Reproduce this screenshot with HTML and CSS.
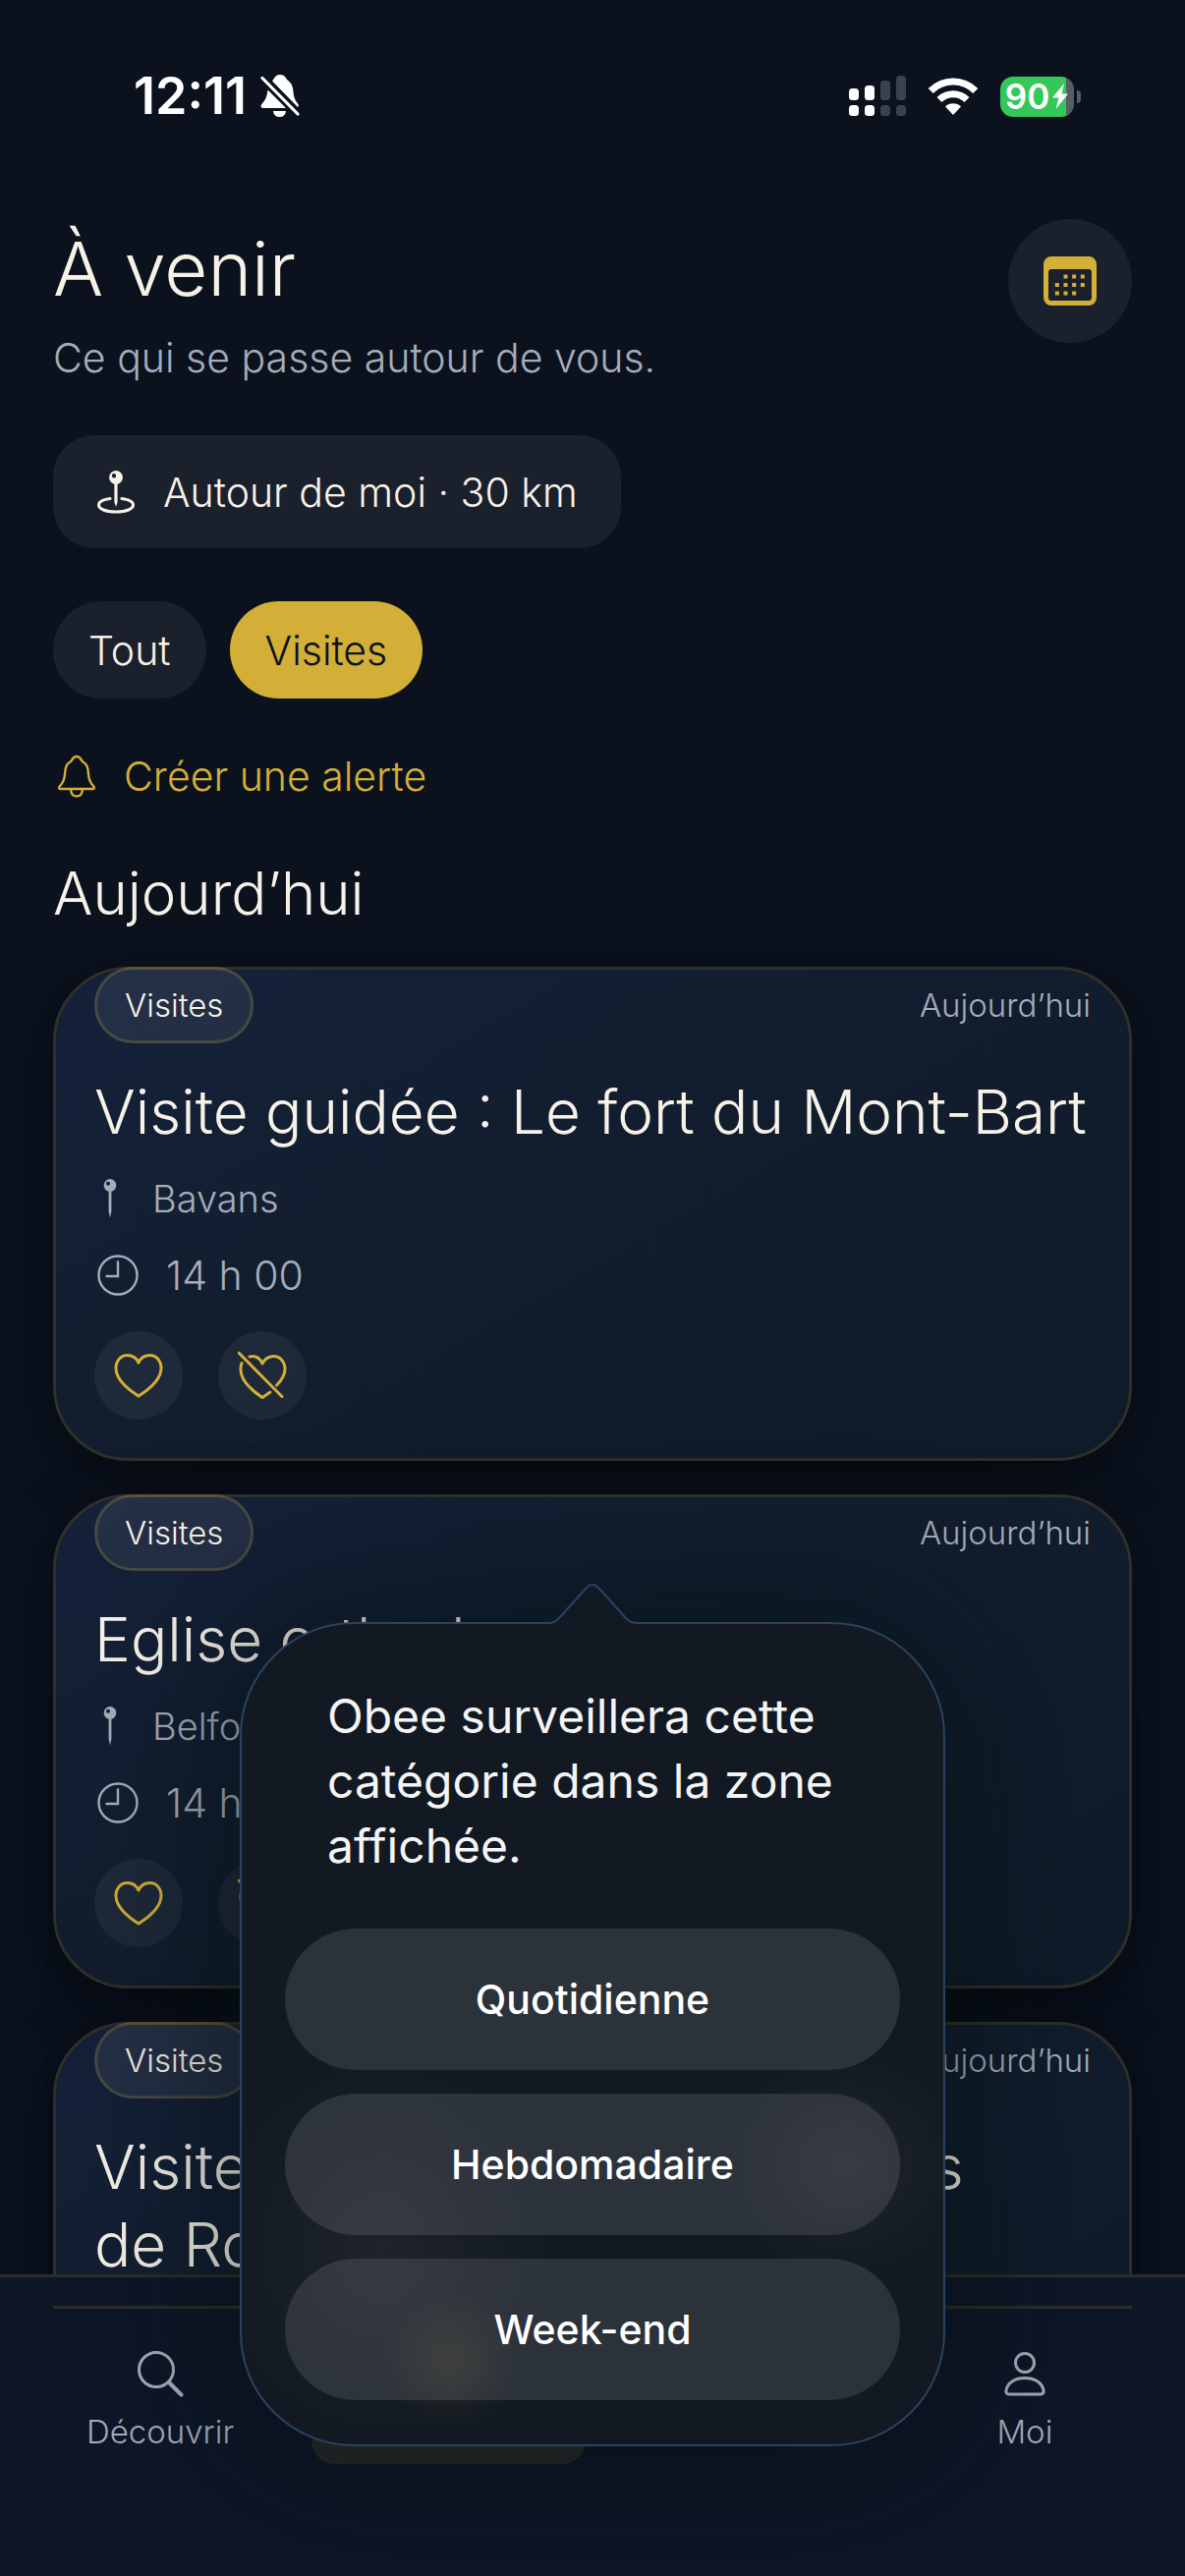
FILE: index.html
```html
<!DOCTYPE html>
<html lang="fr">

<head>
    <meta charset="UTF-8">
    <meta name="viewport" content="width=device-width, initial-scale=1.0">
    <title>À venir</title>
    <link rel="stylesheet" href="styles.css">
</head>

<body>
    <!-- Icônes partagées -->
    <svg class="sprite" aria-hidden="true">
        <symbol id="pin" viewBox="0 0 14 40">
            <path fill="currentColor" fill-rule="evenodd" d="M7 0a6.5 6.5 0 0 1 1.4 12.8V33L7 39.5 5.600 33V12.800A6.500 6.500 0 0 1 7 0zM5 2.800a2 2 0 1 0 0 4 2 2 0 0 0 0-4z" />
        </symbol>
        <symbol id="clock" viewBox="0 0 42 42">
            <g fill="none" stroke="currentColor" stroke-width="2.400" stroke-linecap="round">
                <circle cx="21" cy="21" r="19.500" />
                <path d="M21 7.500V22H9.500" />
            </g>
        </symbol>
        <symbol id="heart" viewBox="0 0 50 46">
            <path fill="none" stroke="currentColor" stroke-width="3" stroke-linejoin="round" d="M25 44C14 37 2 27 2 15.500 2 8 7 2.500 13.500 2.500c5 0 9.200 2.500 11.500 7.500 2.300-5 6.500-7.500 11.500-7.500C43 2.500 48 8 48 15.500 48 27 36 37 25 44z" />
        </symbol>
        <symbol id="heart-off" viewBox="0 0 50 50">
            <g fill="none" stroke="currentColor" stroke-width="3" stroke-linecap="round" stroke-linejoin="round">
                <path d="M12 6c6-1.500 10.500 1.500 13 7 2.500-5 6.500-7.500 11.500-7.500C43 5.500 48 11 48 18.500c0 6-3.500 11.500-8.500 16.500" />
                <path d="M4 12.500C-.5 25 10 37.500 25 47.500l8-5.500" />
                <path d="M1 2l44 44.500" />
            </g>
        </symbol>
    </svg>

    <div class="status-bar">
        <div class="status-time">
            <span>12:11</span>
            <svg width="40" height="44" viewBox="0 0 40 44" aria-hidden="true">
                <g fill="#fff">
                    <path d="M7.500 15.500L26 34H2.500C.5 34 0 32 1 30.500c4-5 5.500-7 6.500-15z" />
                    <path d="M12 6.500C14 5 14.500 0 20 0s6 4.500 8.500 6.200C32 9 33 12 33.500 17c.5 6 1.500 8.500 4.500 12.500 1 1.400 1.200 2.500 0 3.500z" />
                    <path d="M13 37h13c-.5 4-3 6-6.500 6S13.500 41 13 37z" />
                </g>
                <path d="M2 3.500l36 36.500" stroke="#fff" stroke-width="3.200" stroke-linecap="round" />
            </svg>
        </div>
        <div class="status-icons">
            <svg width="58" height="42" viewBox="0 0 58 42" aria-hidden="true">
                <g fill="#fff">
                    <rect y="13" width="10" height="12" rx="3.500" />
                    <rect x="16" y="10" width="10" height="15" rx="3.500" />
                    <rect y="30" width="10" height="11" rx="3.500" />
                    <rect x="16" y="30" width="10" height="11" rx="3.500" />
                </g>
                <g fill="#3c424c">
                    <rect x="32" y="5" width="10" height="20" rx="3.500" />
                    <rect x="48" width="10" height="25" rx="3.500" />
                    <rect x="32" y="30" width="10" height="11" rx="3.500" />
                    <rect x="48" y="30" width="10" height="11" rx="3.500" />
                </g>
            </svg>
            <svg width="52" height="38" viewBox="0 0 52 38" aria-hidden="true">
                <g fill="none" stroke="#fff" stroke-width="7">
                    <path d="M3.200 13.500a32 32 0 0 1 45.600 0" />
                    <path d="M12 22.500a20 20 0 0 1 28 0" />
                </g>
                <path d="M26 38l-8-8.500a11.500 11.500 0 0 1 16 0z" fill="#fff" />
            </svg>
            <div class="battery">
                <span class="battery-level">90<svg width="18" height="26" viewBox="0 0 18 26" aria-hidden="true">
                        <path d="M13 0L1 14.500h6.500L4.500 26 17 10.500h-6.500z" fill="#fff" />
                    </svg></span>
            </div>
        </div>
    </div>

    <main class="content">
        <header class="header">
            <div>
                <h1>À venir</h1>
                <p class="subtitle">Ce qui se passe autour de vous.</p>
            </div>
            <button type="button" class="calendar" aria-label="Calendrier">
                <svg width="54" height="50" viewBox="0 0 54 50">
                    <path fill="currentColor" fill-rule="evenodd" d="M8 0h38a8 8 0 0 1 8 8v34a8 8 0 0 1-8 8H8a8 8 0 0 1-8-8V8a8 8 0 0 1 8-8zM8 13a3 3 0 0 0-3 3v26a3 3 0 0 0 3 3h38a3 3 0 0 0 3-3V16a3 3 0 0 0-3-3z" />
                    <g fill="none" stroke="currentColor" stroke-width="4" stroke-dasharray="4 4.650">
                        <path d="M20.500 20.500h22" />
                        <path d="M11.850 29h31" />
                        <path d="M11.850 37.500h22" />
                    </g>
                </svg>
            </button>
        </header>

        <button type="button" class="zone">
            <svg width="40" height="44" viewBox="0 0 40 44" aria-hidden="true">
                <path fill="currentColor" fill-rule="evenodd" d="M20 0a7 7 0 0 1 1.600 13.800V32L20 37l-1.600-5V13.800A7 7 0 0 1 20 0zM18 3a2.200 2.200 0 1 0 0 4.400A2.200 2.200 0 0 0 18 3z" />
                <path fill="none" stroke="currentColor" stroke-width="3" stroke-linecap="round" d="M14 28.500C7 29.500 2.500 31.500 2.500 35c0 4 7 7 17.500 7s17.500-3 17.500-7c0-3.500-4.500-5.500-11.500-6.500" />
            </svg>
            Autour de moi · 30 km
        </button>

        <div class="filters">
            <button type="button" class="filter">Tout</button>
            <button type="button" class="filter active">Visites</button>
        </div>

        <button type="button" class="alert">
            <svg width="40" height="44" viewBox="0 0 40 44" aria-hidden="true">
                <g fill="none" stroke="currentColor" stroke-width="2.400" stroke-linejoin="round">
                    <path d="M20 2c-4.500 0-4 4-6.500 5.500C9 10 8.500 14 8 20c-.4 6-1.500 8.500-5 12-1.500 1.600-1.200 3 .5 3h33c1.700 0 2-1.400.5-3-3.500-3.500-4.600-6-5-12-.5-6-1-10-5.500-12.500C24 6 24.500 2 20 2z" />
                    <path d="M14 35.500c.3 4.500 2.500 7 6 7s5.700-2.500 6-7" />
                </g>
            </svg>
            Créer une alerte
        </button>

        <h2>Aujourd’hui</h2>

        <div class="events">
            <article class="card">
                <div class="card-top">
                    <span class="tag">Visites</span>
                    <span class="date">Aujourd’hui</span>
                </div>
                <h3>Visite guidée : Le fort du Mont-Bart</h3>
                <p class="place"><svg width="14" height="40" aria-hidden="true"><use href="#pin" /></svg>Bavans</p>
                <p class="time"><svg width="42" height="42" aria-hidden="true"><use href="#clock" /></svg>14 h 00</p>
                <div class="actions">
                    <button type="button" aria-label="Ajouter aux favoris"><svg width="50" height="46"><use href="#heart" /></svg></button>
                    <button type="button" aria-label="Masquer"><svg width="50" height="50"><use href="#heart-off" /></svg></button>
                </div>
            </article>

            <article class="card">
                <div class="card-top">
                    <span class="tag">Visites</span>
                    <span class="date">Aujourd’hui</span>
                </div>
                <h3>Eglise orthodoxe</h3>
                <p class="place"><svg width="14" height="40" aria-hidden="true"><use href="#pin" /></svg>Belfort</p>
                <p class="time"><svg width="42" height="42" aria-hidden="true"><use href="#clock" /></svg>14 h 00</p>
                <div class="actions">
                    <button type="button" aria-label="Ajouter aux favoris"><svg width="50" height="46"><use href="#heart" /></svg></button>
                    <button type="button" aria-label="Masquer"><svg width="50" height="50"><use href="#heart-off" /></svg></button>
                </div>
            </article>

            <article class="card">
                <div class="card-top">
                    <span class="tag">Visites</span>
                    <span class="date">Aujourd’hui</span>
                </div>
                <h3>Visite guidée des campements<br>de Ronchamp</h3>
                <p class="place"><svg width="14" height="40" aria-hidden="true"><use href="#pin" /></svg>Ronchamp</p>
            </article>
        </div>
    </main>

    <nav class="tab-bar">
        <div class="tabs">
            <a href="#decouvrir" class="tab">
                <svg width="48" height="48" viewBox="0 0 48 48" aria-hidden="true">
                    <g fill="none" stroke="currentColor" stroke-width="3" stroke-linecap="round">
                        <circle cx="20" cy="20" r="17.500" />
                        <path d="M33 33l12.500 12.500" stroke-width="4" />
                    </g>
                </svg>
                Découvrir
            </a>
            <a href="#a-venir" class="tab active" aria-current="page">
                <svg width="48" height="48" viewBox="0 0 48 48" aria-hidden="true">
                    <rect x="3" y="5" width="42" height="38" rx="7" fill="none" stroke="currentColor" stroke-width="4" />
                    <path d="M4 8h40v9H4z" fill="currentColor" />
                </svg>
                À venir
            </a>
            <a href="#favoris" class="tab">
                <svg width="48" height="48" aria-hidden="true"><use href="#heart" /></svg>
                Favoris
            </a>
            <a href="#moi" class="tab">
                <svg width="48" height="48" viewBox="0 0 48 48" aria-hidden="true">
                    <g fill="none" stroke="currentColor" stroke-width="3" stroke-linejoin="round">
                        <circle cx="24" cy="13" r="9.500" />
                        <path d="M8 45c-2.500 0-3.500-1.500-3-4C6.500 33 14 28.500 24 28.500S41.500 33 43 41c.5 2.500-.5 4-3 4z" />
                    </g>
                </svg>
                Moi
            </a>
        </div>
    </nav>

    <div class="popover" role="dialog" aria-labelledby="popover-text">
        <svg class="popover-arrow" width="92" height="44" viewBox="0 0 92 44" aria-hidden="true">
            <path d="M0 41.500c6 0 8-1 12-5L39 6c5-5.500 9-5.500 14 0l27 30.500c4 4 6 5 12 5V44H0z" fill="#121922" />
            <path d="M0 41c6 0 8-1 12-5L39 6c5-5.500 9-5.500 14 0l27 30c4 4 6 5 12 5" fill="none" stroke="#2b425f" stroke-width="2" />
        </svg>
        <p id="popover-text">Obee surveillera cette catégorie dans la zone affichée.</p>
        <button type="button">Quotidienne</button>
        <button type="button">Hebdomadaire</button>
        <button type="button">Week-end</button>
    </div>
</body>

</html>
```
FILE: styles.css
```css
* {
    box-sizing: border-box;
}

body {
    position: relative;
    display: flex;
    flex-direction: column;
    height: 100vh;
    margin: 0;
    overflow: hidden;
    background-color: #0b121e;
    color: #f7f1e8;
    font-family: Inter, "Liberation Sans", sans-serif;
    font-size: 41px;
    font-weight: 300;
    line-height: 50px;
}

h1,
h2,
h3,
p {
    margin: 0;
    font-weight: 300;
}

button {
    padding: 0;
    border: none;
    background: none;
    color: inherit;
    font: inherit;
    cursor: pointer;
}

svg {
    display: block;
    flex-shrink: 0;
}

.sprite {
    position: absolute;
    width: 0;
    height: 0;
}

/* Barre d'état */
.status-bar {
    display: flex;
    flex-shrink: 0;
    justify-content: space-between;
    align-items: center;
    height: 196px;
    padding: 0 113px 0 136px;
    color: #fff;
}

.status-time {
    display: flex;
    align-items: center;
    gap: 14px;
    font-size: 52px;
    font-weight: 600;
}

.status-icons {
    display: flex;
    align-items: center;
    gap: 22px;
}

.battery {
    position: relative;
    width: 75px;
    height: 41px;
    border-radius: 13px;
    background: linear-gradient(to right, #34c759 90%, #565b64 90%);
}

.battery::after {
    content: "";
    position: absolute;
    top: 14px;
    right: -7px;
    width: 4px;
    height: 13px;
    border-radius: 0 6px 6px 0;
    background-color: #565b64;
}

.battery-level {
    display: flex;
    align-items: center;
    justify-content: center;
    gap: 2px;
    font-size: 35px;
    font-weight: 600;
    line-height: 41px;
}

/* Contenu */
.content {
    display: flex;
    flex: 1;
    flex-direction: column;
    align-items: flex-start;
    gap: 54px;
    min-height: 0;
    padding: 27px 54px 0;
    overflow: hidden;
}

.header {
    display: flex;
    justify-content: space-between;
    align-items: flex-start;
    width: 100%;
}

h1 {
    font-size: 76px;
    line-height: 100px;
}

.subtitle {
    margin-top: 16px;
    color: #a5adbb;
}

.calendar {
    display: flex;
    justify-content: center;
    align-items: center;
    width: 126px;
    height: 126px;
    border-radius: 50%;
    background-color: #1b212c;
    color: #d3af37;
}

.zone {
    display: flex;
    flex-shrink: 0;
    align-items: center;
    gap: 28px;
    height: 115px;
    padding: 0 44px;
    border-radius: 42px;
    background-color: #1b212c;
}

.filters {
    display: flex;
    gap: 24px;
}

.filter {
    height: 99px;
    padding: 0 36px;
    border-radius: 50px;
    background-color: #1b212c;
}

.filter.active {
    background-color: #d3af37;
    color: #0b121e;
}

.alert {
    display: flex;
    align-items: center;
    gap: 28px;
    padding-left: 4px;
    color: #d3af37;
}

h2 {
    font-size: 60px;
    line-height: 80px;
}

.events {
    display: flex;
    flex-direction: column;
    gap: 34px;
    width: 100%;
    margin-top: -19px;
}

.card {
    padding: 0 39px 39px;
    border: 3px solid #2f3029;
    border-radius: 76px;
    background: linear-gradient(150deg, #14213a, #121e2f 40%, #0f1b29);
    background-clip: padding-box;
    box-shadow: 0 16px 60px rgba(0, 0, 0, 0.45);
}

.card-top {
    display: flex;
    justify-content: space-between;
    align-items: center;
    margin-top: -3px;
    font-size: 33px;
}

.tag {
    padding: 11px 28px;
    border: 3px solid rgba(211, 175, 55, 0.2);
    border-radius: 39px;
    background-color: rgba(255, 255, 255, 0.07);
}

.date {
    color: #a5adbb;
}

h3 {
    margin-top: 30px;
    font-size: 62px;
    line-height: 79px;
}

.place,
.time {
    display: flex;
    align-items: center;
    margin-top: 24px;
    color: #a5adbb;
}

.place {
    gap: 36px;
    padding-left: 9px;
    font-size: 38px;
}

.time {
    gap: 28px;
    padding-left: 3px;
    line-height: 58px;
}

.actions {
    display: flex;
    gap: 36px;
    margin-top: 28px;
}

.actions button {
    display: flex;
    justify-content: center;
    align-items: center;
    width: 90px;
    height: 90px;
    border-radius: 50%;
    background-color: rgba(255, 255, 255, 0.05);
    color: #d3af37;
}

/* Onglets */
.tab-bar {
    flex-shrink: 0;
    height: 307px;
    padding: 29px 24px 0;
    border-top: 3px solid #2d2d29;
    background-color: #0e1727;
}

.tab-bar::before {
    content: "";
    display: block;
    height: 3px;
    margin: 0 30px 24px;
    background-color: #2d2d29;
}

.tabs {
    display: flex;
    gap: 15px;
}

.tab {
    display: flex;
    flex: 1;
    flex-direction: column;
    align-items: center;
    gap: 10px;
    padding: 18px 0 8px;
    border-radius: 24px;
    color: #a5adbb;
    font-size: 33px;
    text-decoration: none;
}

.tab.active {
    background-color: rgba(211, 175, 55, 0.12);
    color: #d3af37;
}

/* Choix de la fréquence */
.popover {
    position: absolute;
    bottom: 132px;
    left: 50%;
    display: flex;
    flex-direction: column;
    gap: 24px;
    width: 718px;
    margin-left: -359px;
    padding: 61px 44px 45px;
    border: 2px solid #2b425f;
    border-radius: 116px;
    background:
        radial-gradient(circle at 30% 90%, rgba(211, 175, 55, 0.09), transparent 70px),
        radial-gradient(ellipse at 86% 66%, rgba(255, 220, 230, 0.06), transparent 130px),
        radial-gradient(ellipse at 20% 76%, rgba(255, 220, 230, 0.05), transparent 180px),
        #121922;
    box-shadow: 0 0 150px 20px rgba(2, 12, 12, 0.5);
}

.popover-arrow {
    position: absolute;
    top: -42px;
    left: 50%;
    margin-left: -46px;
}

.popover p {
    margin: 0 40px 27px 43px;
    color: #f4f4f5;
    font-size: 48px;
    font-weight: 400;
    line-height: 66px;
}

.popover button {
    height: 144px;
    border-radius: 72px;
    background-color: rgba(255, 255, 255, 0.11);
    color: #fff;
    font-size: 41px;
    font-weight: 500;
}
```
